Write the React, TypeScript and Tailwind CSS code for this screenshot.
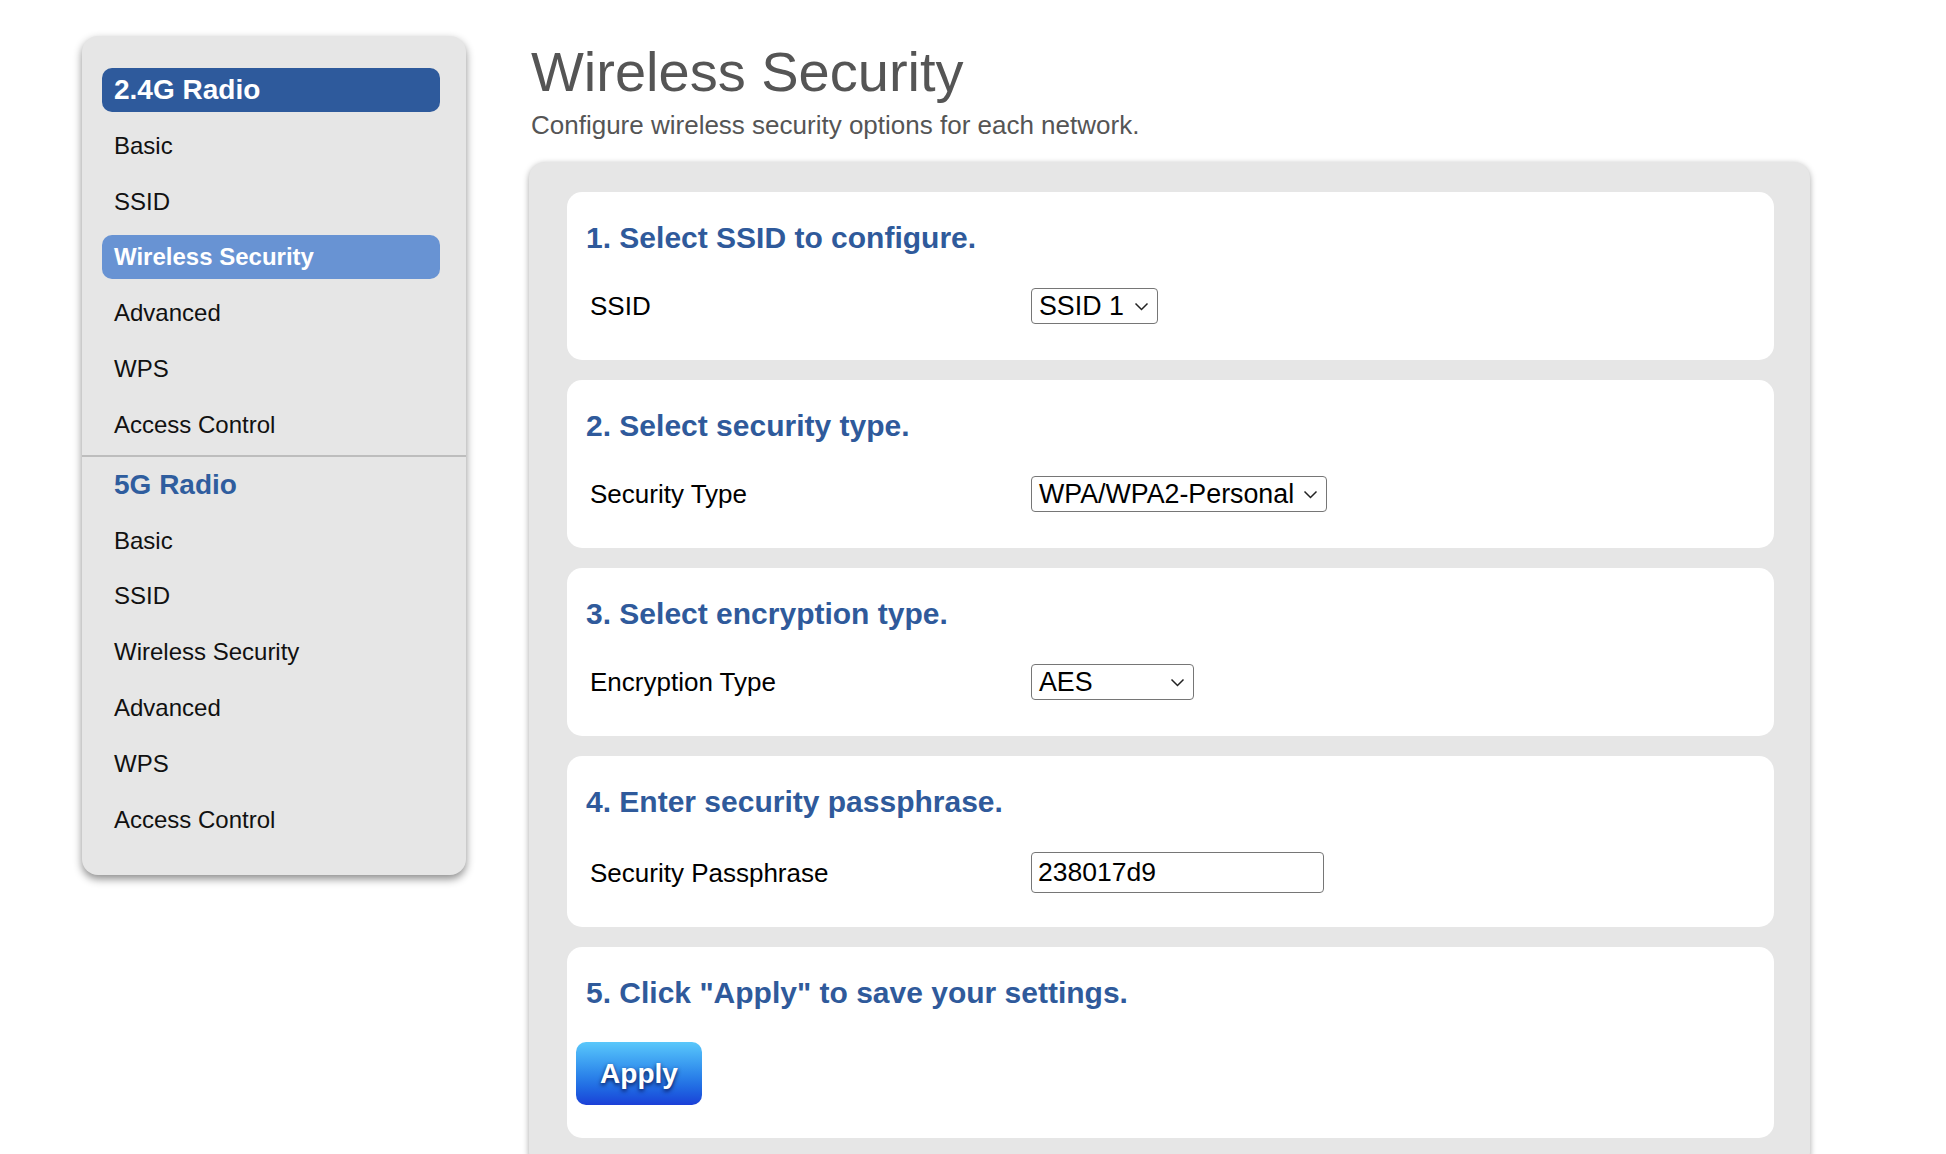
const menu24 = ["Basic", "SSID", "Wireless Security", "Advanced", "WPS", "Access Control"];
const menu5 = ["Basic", "SSID", "Wireless Security", "Advanced", "WPS", "Access Control"];

function Chevron() {
  return (
    <svg width="15" height="9" viewBox="0 0 15 9" className="shrink-0">
      <path d="M1.5 1.5 L7.5 7.5 L13.5 1.5" fill="none" stroke="#222" strokeWidth="1.5" />
    </svg>
  );
}

function FakeSelect({ value, width }: { value: string; width: string }) {
  return (
    <div
      className={`flex h-[36px] ${width} items-center justify-between rounded-[4px] border-[1.5px] border-[#767676] bg-white pl-[7px] pr-[8px] text-[26.8px] leading-none text-black`}
    >
      <span>{value}</span>
      <Chevron />
    </div>
  );
}

function Card({ title, tight, children }: { title: string; tight?: boolean; children: React.ReactNode }) {
  return (
    <div className={tight ? "rounded-[15px] bg-white pt-[29px] pb-[34px]" : "rounded-[15px] bg-white pt-[29px] pb-[36px]"}>
      <h2 className="pl-[19px] text-[30px] font-bold leading-[34px] text-[#2f5a9b]">{title}</h2>
      <div className="mt-[33px]">{children}</div>
    </div>
  );
}

function Row({ label, children }: { label: string; children: React.ReactNode }) {
  return (
    <div className="flex items-center pl-[23px]">
      <div className="w-[441px] text-[26px] leading-none text-black">{label}</div>
      {children}
    </div>
  );
}

function SideItem({ label, active }: { label: string; active?: boolean }) {
  return (
    <div
      className={
        active
          ? "flex h-[44px] items-center rounded-[10px] bg-[#6893d3] pl-[12px] text-[24px] font-bold text-white"
          : "flex h-[44px] items-center pl-[12px] text-[24px] text-[#111]"
      }
    >
      {label}
    </div>
  );
}

export default function App() {
  return (
    <div className="flex min-h-[1154px] items-start bg-white pl-[82px] pt-[36px] font-['Liberation_Sans',Arial,Helvetica,sans-serif]">
      <aside className="w-[384px] shrink-0 rounded-[16px] bg-[#e6e6e6] shadow-[0_4px_8px_rgba(0,0,0,0.45)]">
        <div className="flex flex-col gap-[11.8px] pt-[32px] pb-[8px] pl-[20px] pr-[26px]">
          <div className="flex h-[44px] items-center rounded-[10px] bg-[#2e5a9c] pl-[12px] text-[28px] font-bold text-white">
            2.4G Radio
          </div>
          {menu24.map((m) => (
            <SideItem key={"a" + m} label={m} active={m === "Wireless Security"} />
          ))}
        </div>
        <div className="h-[2px] bg-[#bdbdbd]" />
        <div className="flex flex-col gap-[11.8px] pt-[6px] pb-[33px] pl-[20px] pr-[26px]">
          <div className="flex h-[44px] items-center pl-[12px] text-[28px] font-bold text-[#2f5d9e]">5G Radio</div>
          {menu5.map((m) => (
            <SideItem key={"b" + m} label={m} />
          ))}
        </div>
      </aside>

      <main className="ml-[63px] w-[1281px] shrink-0">
        <h1 className="mt-[4px] pl-[2px] text-[56px] font-normal leading-[64px] text-[#555]">Wireless Security</h1>
        <p className="mt-[5.5px] pl-[2px] text-[26px] leading-[30px] text-[#555]">
          Configure wireless security options for each network.
        </p>

        <div className="mt-[22.5px] flex flex-col gap-[20px] rounded-[16px] bg-[#e6e6e6] pt-[30px] pb-[30px] pl-[38px] pr-[36px] shadow-[0_2px_6px_rgba(0,0,0,0.35)]">
          <Card title="1. Select SSID to configure.">
            <Row label="SSID">
              <FakeSelect value="SSID 1" width="w-[127px]" />
            </Row>
          </Card>
          <Card title="2. Select security type.">
            <Row label="Security Type">
              <FakeSelect value="WPA/WPA2-Personal" width="w-[296px]" />
            </Row>
          </Card>
          <Card title="3. Select encryption type.">
            <Row label="Encryption Type">
              <FakeSelect value="AES" width="w-[163px]" />
            </Row>
          </Card>
          <Card title="4. Enter security passphrase." tight>
            <Row label="Security Passphrase">
              <input
                readOnly
                value="238017d9"
                className="h-[41px] w-[293px] rounded-[4px] border-[1.5px] border-[#767676] bg-white pl-[6px] text-[26.5px] text-black outline-none"
              />
            </Row>
          </Card>
          <div className="rounded-[15px] bg-white pt-[29px] pb-[33px]">
            <h2 className="pl-[19px] text-[30px] font-bold leading-[34px] text-[#2f5a9b]">
              5. Click "Apply" to save your settings.
            </h2>
            <button className="ml-[9px] mt-[32px] flex h-[63px] w-[126px] items-center justify-center rounded-[10px] bg-linear-to-b from-[#5ac8fb] to-[#1c3fd7] text-[28px] font-bold text-white [text-shadow:0_2px_4px_rgba(0,0,50,0.85)]">
              Apply
            </button>
          </div>
        </div>
      </main>
    </div>
  );
}
